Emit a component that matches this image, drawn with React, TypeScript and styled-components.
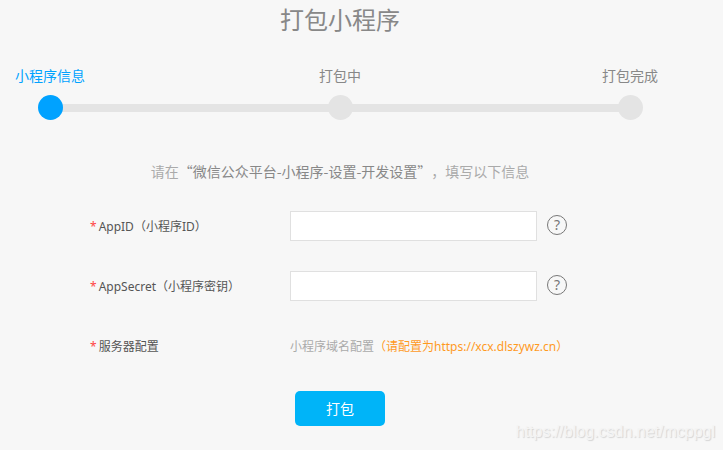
import React from "react";
import styled, { createGlobalStyle } from "styled-components";

const GlobalStyle = createGlobalStyle`
  *, *::before, *::after { box-sizing: border-box; }
  body {
    margin: 0;
    background: #f7f7f7;
    font-family: "Noto Sans", "Noto Sans CJK SC", sans-serif;
    font-size: 12px;
    color: #555;
    text-spacing-trim: space-all;
  }
`;

const Page = styled.div`
  position: relative;
  min-height: 100vh;
  overflow: hidden;
`;

const Main = styled.main`
  display: flex;
  flex-direction: column;
  padding: 4px 43px 24px 0;
`;

const Title = styled.h1`
  margin: 0;
  font-size: 24px;
  line-height: 32px;
  font-weight: 400;
  text-align: center;
  color: #888;
`;

const StepLabels = styled.ol`
  display: flex;
  justify-content: space-between;
  margin: 30px 0 9px;
  padding: 0;
  list-style: none;
`;

const StepLabel = styled.li<{ $active?: boolean }>`
  width: 100px;
  font-size: 14px;
  line-height: 20px;
  text-align: center;
  color: ${(p) => (p.$active ? "#00a2ff" : "#888")};
`;

const Track = styled.div`
  display: flex;
  align-items: center;
  padding: 0 37px 0 38px;
`;

const Dot = styled.span<{ $active?: boolean }>`
  z-index: 1;
  flex: none;
  width: 25px;
  height: 25px;
  border-radius: 50%;
  background: ${(p) => (p.$active ? "#00a2ff" : "#e4e4e4")};
`;

const Line = styled.span`
  flex: 1;
  height: 8px;
  margin: 0 -2px;
  background: #e4e4e4;
`;

const Hint = styled.p`
  margin: 41px 0 30px;
  font-family: "Noto Sans CJK SC", sans-serif;
  font-size: 14px;
  line-height: 20px;
  text-align: center;
  color: #aaa;
`;

const HintPath = styled.span`
  color: #888;
`;

const Form = styled.form`
  display: flex;
  flex-direction: column;
  gap: 30px;
  padding-left: 90px;
`;

const Row = styled.div`
  display: grid;
  grid-template-columns: 200px minmax(0, 1fr);
  align-items: center;
  min-height: 30px;
`;

const labelStyle = `
  padding-top: 2px;
  line-height: 20px;
  white-space: nowrap;
  color: #555;
`;

const Label = styled.label`${labelStyle}`;
const RowName = styled.span`${labelStyle}`;

const Required = styled.span`
  margin-right: 2px;
  color: #ff4444;
`;

const Field = styled.div`
  display: grid;
  grid-template-columns: minmax(0, 247px) 20px;
  align-items: center;
  gap: 10px;
`;

const TextInput = styled.input`
  width: 100%;
  height: 30px;
  padding: 0 8px;
  border: 1px solid #e0e0e0;
  border-radius: 0;
  background: #fff;
  font: inherit;
  color: #555;
`;

const HelpButton = styled.button`
  width: 20px;
  height: 20px;
  margin-bottom: 2px;
  padding: 0;
  border: 1px solid #777;
  border-radius: 50%;
  background: transparent;
  font-family: inherit;
  font-size: 14px;
  line-height: 18px;
  text-align: center;
  color: #777;
  cursor: pointer;
`;

const Note = styled.span`
  padding-top: 2px;
  line-height: 20px;
  color: #aaa;
`;

const Highlight = styled.span`
  color: #ff9a1f;
`;

const SubmitButton = styled.button`
  align-self: center;
  width: 90px;
  height: 35px;
  margin-right: 90px;
  padding: 0;
  border: 0;
  border-radius: 5px;
  background: #00b4f8;
  font-family: inherit;
  font-size: 14px;
  line-height: 20px;
  color: #fff;
  cursor: pointer;
`;

const Watermark = styled.span`
  position: absolute;
  right: 8px;
  bottom: 8px;
  font-family: "Liberation Sans", Arial, sans-serif;
  font-size: 16px;
  line-height: 20px;
  color: #f4f4f4;
  text-shadow: 1px 1px 1px #d4d4d4;
  pointer-events: none;
`;

const steps = ["小程序信息", "打包中", "打包完成"];
const fields = [
  { id: "app-id", label: "AppID（小程序ID）" },
  { id: "app-secret", label: "AppSecret（小程序密钥）" },
];

export default function App() {
  return (
    <Page lang="zh-CN">
      <GlobalStyle />
      <Main>
        <Title>打包小程序</Title>
        <StepLabels>
          {steps.map((step, i) => (
            <StepLabel key={step} $active={i === 0} aria-current={i === 0 ? "step" : undefined}>
              {step}
            </StepLabel>
          ))}
        </StepLabels>
        <Track aria-hidden="true">
          {steps.map((step, i) => (
            <React.Fragment key={step}>
              {i > 0 && <Line />}
              <Dot $active={i === 0} />
            </React.Fragment>
          ))}
        </Track>
        <Hint>
          请在<HintPath>“微信公众平台-小程序-设置-开发设置”</HintPath>，填写以下信息
        </Hint>
        <Form onSubmit={(e) => e.preventDefault()}>
          {fields.map((field) => (
            <Row key={field.id}>
              <Label htmlFor={field.id}>
                <Required>*</Required>
                {field.label}
              </Label>
              <Field>
                <TextInput id={field.id} type="text" required />
                <HelpButton type="button" aria-label={`${field.label}帮助`}>
                  ?
                </HelpButton>
              </Field>
            </Row>
          ))}
          <Row>
            <RowName>
              <Required>*</Required>
              服务器配置
            </RowName>
            <Note>
              小程序域名配置<Highlight>（请配置为https://xcx.dlszywz.cn）</Highlight>
            </Note>
          </Row>
          <SubmitButton type="submit">打包</SubmitButton>
        </Form>
      </Main>
      <Watermark>https://blog.csdn.net/mcppgl</Watermark>
    </Page>
  );
}
